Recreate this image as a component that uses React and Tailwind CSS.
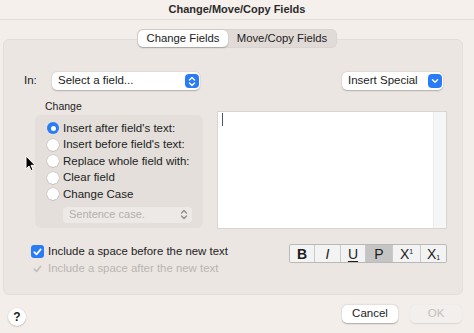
import React from "react";

const font = { fontFamily: "'Liberation Sans', Arial, sans-serif" };

function Stepper({ blue = true }) {
  return (
    <div className={`w-[14px] h-[14px] rounded-[4px] flex items-center justify-center ${blue ? "bg-[#2a7cf6]" : ""}`}>
      <svg width="8" height="11" viewBox="0 0 8 11" fill="none">
        <path d="M1.5 4 L4 1.5 L6.5 4" stroke={blue ? "white" : "#8f8f8f"} strokeWidth="1.4" strokeLinecap="round" strokeLinejoin="round" />
        <path d="M1.5 7 L4 9.5 L6.5 7" stroke={blue ? "white" : "#8f8f8f"} strokeWidth="1.4" strokeLinecap="round" strokeLinejoin="round" />
      </svg>
    </div>
  );
}

function Radio({ checked, label }) {
  return (
    <div className="flex items-center h-[16.5px]">
      {checked ? (
        <div className="w-[12px] h-[12px] rounded-full bg-[#2a7cf6] flex items-center justify-center">
          <div className="w-[5px] h-[5px] rounded-full bg-white" />
        </div>
      ) : (
        <div className="w-[12px] h-[12px] rounded-full bg-white shadow-[0_0_0_0.5px_rgba(0,0,0,0.15),0_0.5px_1px_rgba(0,0,0,0.15)]" />
      )}
      <span className="ml-[4px] text-[11.5px] text-[#222] whitespace-nowrap">{label}</span>
    </div>
  );
}

function FmtBtn({ children, sel, last }) {
  return (
    <div className={`flex items-center justify-center h-full text-[14px] leading-none text-[#1c1c1c] ${sel ? "bg-[#c4c4c4]" : "bg-[#f3f3f3]"} ${last ? "" : "border-r border-[#c9c9c9]"}`}>
      {children}
    </div>
  );
}

export default function App() {
  return (
    <div className="w-[474px] h-[333px] bg-[#f4eeea] flex flex-col relative overflow-hidden" style={font}>
      {/* title */}
      <div className="h-[20px] flex items-center justify-center border-b border-[#e2dcd8] bg-[#f6f0ec]">
        <span className="text-[11px] font-bold text-[#2b2b2b]">Change/Move/Copy Fields</span>
      </div>

      {/* tabs */}
      <div className="flex justify-center mt-[9px] relative z-10">
        <div className="flex h-[19px] rounded-[6px] bg-[#e1dbd7] p-[1px] shadow-[inset_0_0_0_0.5px_rgba(0,0,0,0.06)]">
          <div className="w-[90px] rounded-[5px] bg-white shadow-[0_0.5px_1.5px_rgba(0,0,0,0.25)] flex items-center justify-center text-[11.3px] text-[#222] whitespace-nowrap">
            Change Fields
          </div>
          <div className="w-[108px] flex items-center justify-center text-[11.3px] text-[#222] whitespace-nowrap">
            Move/Copy Fields
          </div>
        </div>
      </div>

      {/* panel */}
      <div className="ml-[3px] w-[460px] h-[256px] -mt-[9px] rounded-[6px] bg-[#ece6e2] border border-[#e4dedb] flex flex-col">
        {/* In row */}
        <div className="flex items-center mt-[32px] h-[18px]">
          <span className="ml-[20px] text-[11.5px] text-[#222] w-[28px]">In:</span>
          <div className="w-[148px] h-[18px] rounded-[5px] bg-white shadow-[0_0.5px_1.5px_rgba(0,0,0,0.25)] flex items-center pl-[6px] pr-[1.5px] justify-between">
            <span className="text-[11.5px] text-[#222] whitespace-nowrap">Select a field...</span>
            <Stepper />
          </div>
          <div className="ml-auto mr-[19px] w-[101px] h-[18px] rounded-[5px] bg-white shadow-[0_0.5px_1.5px_rgba(0,0,0,0.25)] flex items-center pl-[6px] pr-[1.5px] justify-between">
            <span className="text-[11.5px] text-[#222] whitespace-nowrap">Insert Special</span>
            <div className="w-[14px] h-[14px] rounded-[4px] bg-[#2a7cf6] flex items-center justify-center">
              <svg width="8" height="6" viewBox="0 0 8 6" fill="none">
                <path d="M1.5 1.8 L4 4.3 L6.5 1.8" stroke="white" strokeWidth="1.4" strokeLinecap="round" strokeLinejoin="round" />
              </svg>
            </div>
          </div>
        </div>

        {/* middle */}
        <div className="flex mt-[8px]">
          <div className="flex flex-col ml-[31px]">
            <span className="ml-[10px] text-[10.5px] text-[#222] h-[16px] leading-[16px]">Change</span>
            <div className="w-[168px] h-[113px] rounded-[6px] bg-[#e4dfdb] mt-[1px] flex flex-col pl-[12px] pt-[5px]">
              <Radio checked label="Insert after field's text:" />
              <Radio label="Insert before field's text:" />
              <Radio label="Replace whole field with:" />
              <Radio label="Clear field" />
              <Radio label="Change Case" />
              <div className="ml-[16px] mt-[4px] w-[129px] h-[16px] rounded-[4px] bg-[#ede9e6] flex items-center justify-between pl-[6px] pr-[1px]">
                <span className="text-[11px] text-[#b3b0ad] whitespace-nowrap">Sentence case.</span>
                <Stepper blue={false} />
              </div>
            </div>
          </div>
          <div className="ml-[14px] mt-[13px] w-[230px] h-[118px] bg-white border border-[#d9d5d2] flex">
            <div className="flex-1 relative">
              <div className="absolute left-[4px] top-[1px] w-[1px] h-[13px] bg-[#555]" />
            </div>
            <div className="w-[13px] h-full bg-[#f6f6f6] border-l border-[#ececec]" />
          </div>
        </div>

        {/* bottom of panel */}
        <div className="flex mt-[14px]">
          <div className="flex flex-col ml-[27px]">
            <div className="flex items-center h-[17px]">
              <div className="w-[13px] h-[13px] rounded-[3px] bg-[#2a7cf6] flex items-center justify-center">
                <svg width="9" height="8" viewBox="0 0 9 8" fill="none">
                  <path d="M1.3 4.2 L3.5 6.4 L7.7 1.4" stroke="white" strokeWidth="1.7" strokeLinecap="round" strokeLinejoin="round" />
                </svg>
              </div>
              <span className="ml-[4px] text-[11.4px] text-[#222] whitespace-nowrap">Include a space before the new text</span>
            </div>
            <div className="flex items-center h-[17px]">
              <div className="w-[13px] h-[13px] flex items-center justify-center">
                <svg width="9" height="8" viewBox="0 0 9 8" fill="none">
                  <path d="M1.3 4.2 L3.5 6.4 L7.7 1.4" stroke="#c4c0bd" strokeWidth="1.7" strokeLinecap="round" strokeLinejoin="round" />
                </svg>
              </div>
              <span className="ml-[4px] text-[11.4px] text-[#b9b5b2] whitespace-nowrap">Include a space after the new text</span>
            </div>
          </div>
          <div className="ml-auto mr-[15px] mt-[1px] h-[19px] w-[158px] grid grid-cols-[25px_26px_25px_27px_28px_1fr] border border-[#b9b9b9] rounded-[2px] overflow-hidden">
            <FmtBtn><span className="font-bold">B</span></FmtBtn>
            <FmtBtn><span className="italic">I</span></FmtBtn>
            <FmtBtn><span className="underline underline-offset-2 decoration-1">U</span></FmtBtn>
            <FmtBtn sel><span>P</span></FmtBtn>
            <FmtBtn><span className="flex items-start">X<span className="text-[7px] leading-none mt-[1px]">1</span></span></FmtBtn>
            <FmtBtn last><span className="flex items-end">X<span className="text-[7px] leading-none">1</span></span></FmtBtn>
          </div>
        </div>
      </div>

      {/* footer */}
      <div className="flex items-center mt-[9px] h-[20px]">
        <div className="ml-[8px] mt-[5px] w-[18px] h-[18px] rounded-full bg-white shadow-[0_0.5px_1.5px_rgba(0,0,0,0.3)] flex items-center justify-center text-[12px] font-bold text-[#222]">?</div>
        <div className="ml-auto w-[56px] h-[18px] rounded-[5px] bg-white shadow-[0_0.5px_1.5px_rgba(0,0,0,0.3)] flex items-center justify-center text-[11.5px] text-[#222]">Cancel</div>
        <div className="ml-[12px] mr-[12px] w-[52px] h-[18px] rounded-[5px] bg-[#f3efec] shadow-[0_0.5px_1px_rgba(0,0,0,0.1)] flex items-center justify-center text-[11.5px] text-[#c3bfbc]">OK</div>
      </div>

      {/* mouse cursor */}
      <svg className="absolute left-[25px] top-[155px]" width="11" height="17" viewBox="0 0 11 17">
        <path d="M1 1 L1 14 L4 11 L6 15.5 L8 14.6 L6 10.3 L10 10.3 Z" fill="black" stroke="white" strokeWidth="1" strokeLinejoin="round" />
      </svg>
    </div>
  );
}
